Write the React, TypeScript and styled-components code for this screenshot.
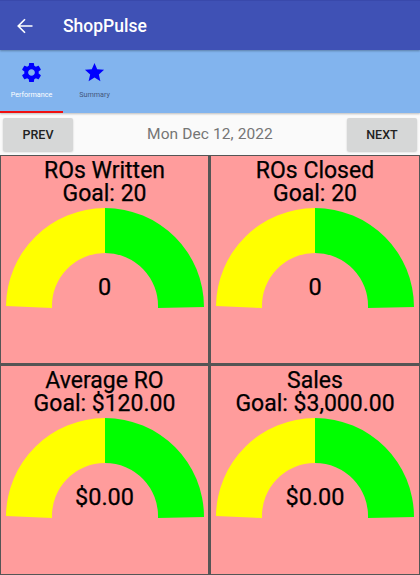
import React from "react";
import styled, { createGlobalStyle } from "styled-components";

const Global = createGlobalStyle`
  html, body { margin: 0; padding: 0; background: #fafafa; }
  body { font-family: Roboto, "Liberation Sans", sans-serif; }
  * { box-sizing: border-box; }
`;
const Page = styled.div`
  width: 420px; height: 575px; display: flex; flex-direction: column; overflow: hidden; background: #fafafa;
`;
const AppBar = styled.header`
  height: 50px; flex: none; background: #3f51b5; border-top: 1px solid #3949ab; display: flex; align-items: center;
  padding-left: 16px; gap: 29px; color: #fff; box-shadow: 0 1px 2px rgba(0,0,0,.3); position: relative;
`;
const Title = styled.h1`
  margin: 0; font-size: 17.5px; font-weight: 500; letter-spacing: 0;
`;
const TabBar = styled.nav`
  height: 63px; flex: none; background: #82b4ee; display: flex; box-shadow: 0 1px 2px rgba(0,0,0,.25);
`;
const Tab = styled.div<{ $active?: boolean }>`
  width: 63px; display: flex; flex-direction: column; align-items: center; padding-top: 11px;
  border-bottom: 2px solid ${p => (p.$active ? "#f01010" : "transparent")};
  color: ${p => (p.$active ? "#fff" : "#45577c")};
`;
const TabLabel = styled.span`
  font-size: 7.2px; line-height: 10px; margin-top: 6px; white-space: nowrap;
`;
const Toolbar = styled.div`
  height: 42px; flex: none; display: flex; align-items: center; justify-content: space-between; padding: 4px 3px 4px;
`;
const NavButton = styled.button`
  width: 70px; height: 33px; border: 0; border-radius: 2px; background: #d6d7d7; color: #222;
  font: 500 12.5px Roboto, sans-serif; box-shadow: 0 1px 2px rgba(0,0,0,.2); padding: 0;
`;
const DateLabel = styled.span`
  font-size: 15.5px; color: #757575; letter-spacing: .1px;
`;
const Grid = styled.main`
  flex: none; height: 420px; background: #555; padding: 1px; display: grid; gap: 3px;
  grid-template-columns: 207px 208px; grid-template-rows: 207px 1fr;
`;
const Cell = styled.section`
  background: #ff9c9c; display: flex; flex-direction: column; align-items: center;
  padding-top: 3px; color: #000;
`;
const CellTitle = styled.div`
  font-size: 23px; line-height: 23px; text-align: center; white-space: nowrap;
  -webkit-text-stroke: 0.25px #000;
`;
const GaugeWrap = styled.div`
  position: relative; width: 200px; height: 100px; margin-top: 3px;
`;
const GaugeValue = styled.div`
  position: absolute; left: 0; right: 0; top: 64px; text-align: center; font-size: 23.5px; line-height: 30px;
  -webkit-text-stroke: 0.25px #000;
`;

const Gear = () => (
  <svg width="23" height="23" viewBox="0 0 24 24" fill="#0000ff" aria-hidden="true">
    <path d="M19.43 12.98c.04-.32.07-.64.07-.98s-.03-.66-.07-.98l2.11-1.65c.19-.15.24-.42.12-.64l-2-3.46c-.12-.22-.39-.3-.61-.22l-2.49 1c-.52-.4-1.08-.73-1.69-.98l-.38-2.65C14.46 2.18 14.25 2 14 2h-4c-.25 0-.46.18-.49.42l-.38 2.65c-.61.25-1.17.59-1.69.98l-2.49-1c-.23-.09-.49 0-.61.22l-2 3.46c-.13.22-.07.49.12.64l2.11 1.65c-.04.32-.07.65-.07.98s.03.66.07.98l-2.11 1.65c-.19.15-.24.42-.12.64l2 3.46c.12.22.39.3.61.22l2.49-1c.52.4 1.08.73 1.69.98l.38 2.65c.03.24.24.42.49.42h4c.25 0 .46-.18.49-.42l.38-2.65c.61-.25 1.17-.59 1.69-.98l2.49 1c.23.09.49 0 .61-.22l2-3.46c.12-.22.07-.49-.12-.64l-2.11-1.65zM12 15.5c-1.93 0-3.5-1.57-3.5-3.5s1.57-3.5 3.5-3.5 3.5 1.57 3.5 3.5-1.57 3.5-3.5 3.5z" />
  </svg>
);
const Star = () => (
  <svg width="23" height="23" viewBox="0 0 24 24" fill="#0000ff" aria-hidden="true">
    <path d="M12 17.27 18.18 21l-1.64-7.03L22 9.24l-7.19-.61L12 2 9.19 8.63 2 9.24l5.46 4.73L5.82 21z" />
  </svg>
);
const Back = () => (
  <svg width="18" height="18" viewBox="0 0 24 24" fill="none" stroke="#fff" strokeWidth="2.2" aria-hidden="true">
    <path d="M22 12H3M12 3l-9 9 9 9" />
  </svg>
);
const Gauge = () => (
  <svg width="200" height="100" viewBox="0 0 200 100" aria-hidden="true">
    <path d="M1 98 A99 99 0 0 1 100 0 L100 45 A53 53 0 0 0 47 100 Z" fill="#ffff00" />
    <path d="M100 0 A99 99 0 0 1 199 99 L153 100 A53 53 0 0 0 100 45 Z" fill="#00ff00" />
  </svg>
);

const metrics = [
  { name: "ROs Written", goal: "Goal: 20", value: "0" },
  { name: "ROs Closed", goal: "Goal: 20", value: "0" },
  { name: "Average RO", goal: "Goal: $120.00", value: "$0.00" },
  { name: "Sales", goal: "Goal: $3,000.00", value: "$0.00" },
];

export default function App() {
  return (
    <Page>
      <Global />
      <AppBar>
        <Back />
        <Title>ShopPulse</Title>
      </AppBar>
      <TabBar>
        <Tab $active><Gear /><TabLabel>Performance</TabLabel></Tab>
        <Tab><Star /><TabLabel>Summary</TabLabel></Tab>
      </TabBar>
      <Toolbar>
        <NavButton>PREV</NavButton>
        <DateLabel>Mon Dec 12, 2022</DateLabel>
        <NavButton>NEXT</NavButton>
      </Toolbar>
      <Grid>
        {metrics.map(m => (
          <Cell key={m.name}>
            <CellTitle>{m.name}<br />{m.goal}</CellTitle>
            <GaugeWrap>
              <Gauge />
              <GaugeValue>{m.value}</GaugeValue>
            </GaugeWrap>
          </Cell>
        ))}
      </Grid>
    </Page>
  );
}
